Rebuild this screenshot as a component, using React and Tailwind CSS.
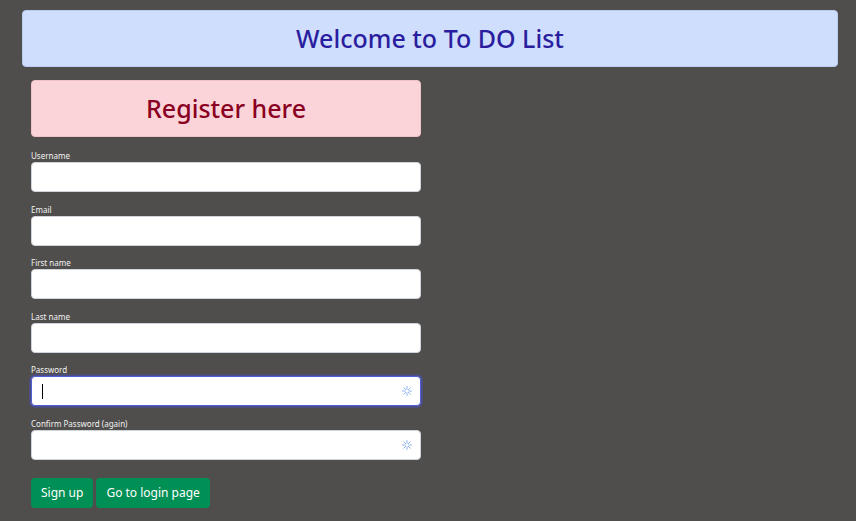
import React from 'react';

const Sparkle = () => (
  <svg width="10" height="10" viewBox="0 0 10 10" className="shrink-0">
    <g stroke="#8fb3ee" strokeWidth="1" strokeLinecap="round">
      <line x1="5" y1="0.5" x2="5" y2="9.5" />
      <line x1="0.5" y1="5" x2="9.5" y2="5" />
      <line x1="1.8" y1="1.8" x2="8.2" y2="8.2" />
      <line x1="8.2" y1="1.8" x2="1.8" y2="8.2" />
    </g>
    <circle cx="5" cy="5" r="1.6" fill="#ffffff" />
  </svg>
);

const Field = ({ label, focused, password }) => (
  <div className="flex flex-col">
    <label className="h-[12px] text-[8px] leading-[12px] text-[#f2f2f2]">{label}</label>
    <div
      className={
        'flex h-[30px] items-center rounded-[4px] bg-white pl-[10px] pr-[8px] ' +
        (focused
          ? 'border border-[#5060d8] shadow-[0_0_0_2px_rgba(70,80,190,0.45)]'
          : 'border border-[#cfd4da]')
      }
    >
      <div className="flex-1">
        {focused && <div className="h-[15px] w-px bg-black" />}
      </div>
      {password && <Sparkle />}
    </div>
  </div>
);

export default function App() {
  return (
    <div
      className="min-h-[521px] bg-[#504e4c] pt-[10px]"
      style={{ fontFamily: '"Noto Sans", "Open Sans", sans-serif' }}
    >
      <div className="ml-[22px] mr-[18px] flex h-[57px] items-center justify-center rounded-[4px] border border-[#b9cdf7] bg-[#d0defe]">
        <h1 className="text-[25px] font-medium text-[#2a1e9f]">Welcome to To DO List</h1>
      </div>

      <div className="ml-[31px] mt-[13px] w-[390px]">
        <div className="flex h-[57px] items-center justify-center rounded-[4px] border border-[#f1c2c7] bg-[#fad4d9]">
          <h2 className="text-[25px] font-medium text-[#8a0022]">Register here</h2>
        </div>

        <div className="mt-[13px] flex flex-col gap-[11.5px]">
          <Field label="Username" />
          <Field label="Email" />
          <Field label="First name" />
          <Field label="Last name" />
          <Field label="Password" focused password />
          <Field label="Confirm Password (again)" password />
        </div>

        <div className="mt-[18px] flex gap-[3px]">
          <button className="h-[30px] rounded-[4px] bg-[#008f55] px-[10px] text-[12px] text-white">
            Sign up
          </button>
          <button className="h-[30px] rounded-[4px] bg-[#008f55] px-[10px] text-[12px] text-white">
            Go to login page
          </button>
        </div>
      </div>
    </div>
  );
}
